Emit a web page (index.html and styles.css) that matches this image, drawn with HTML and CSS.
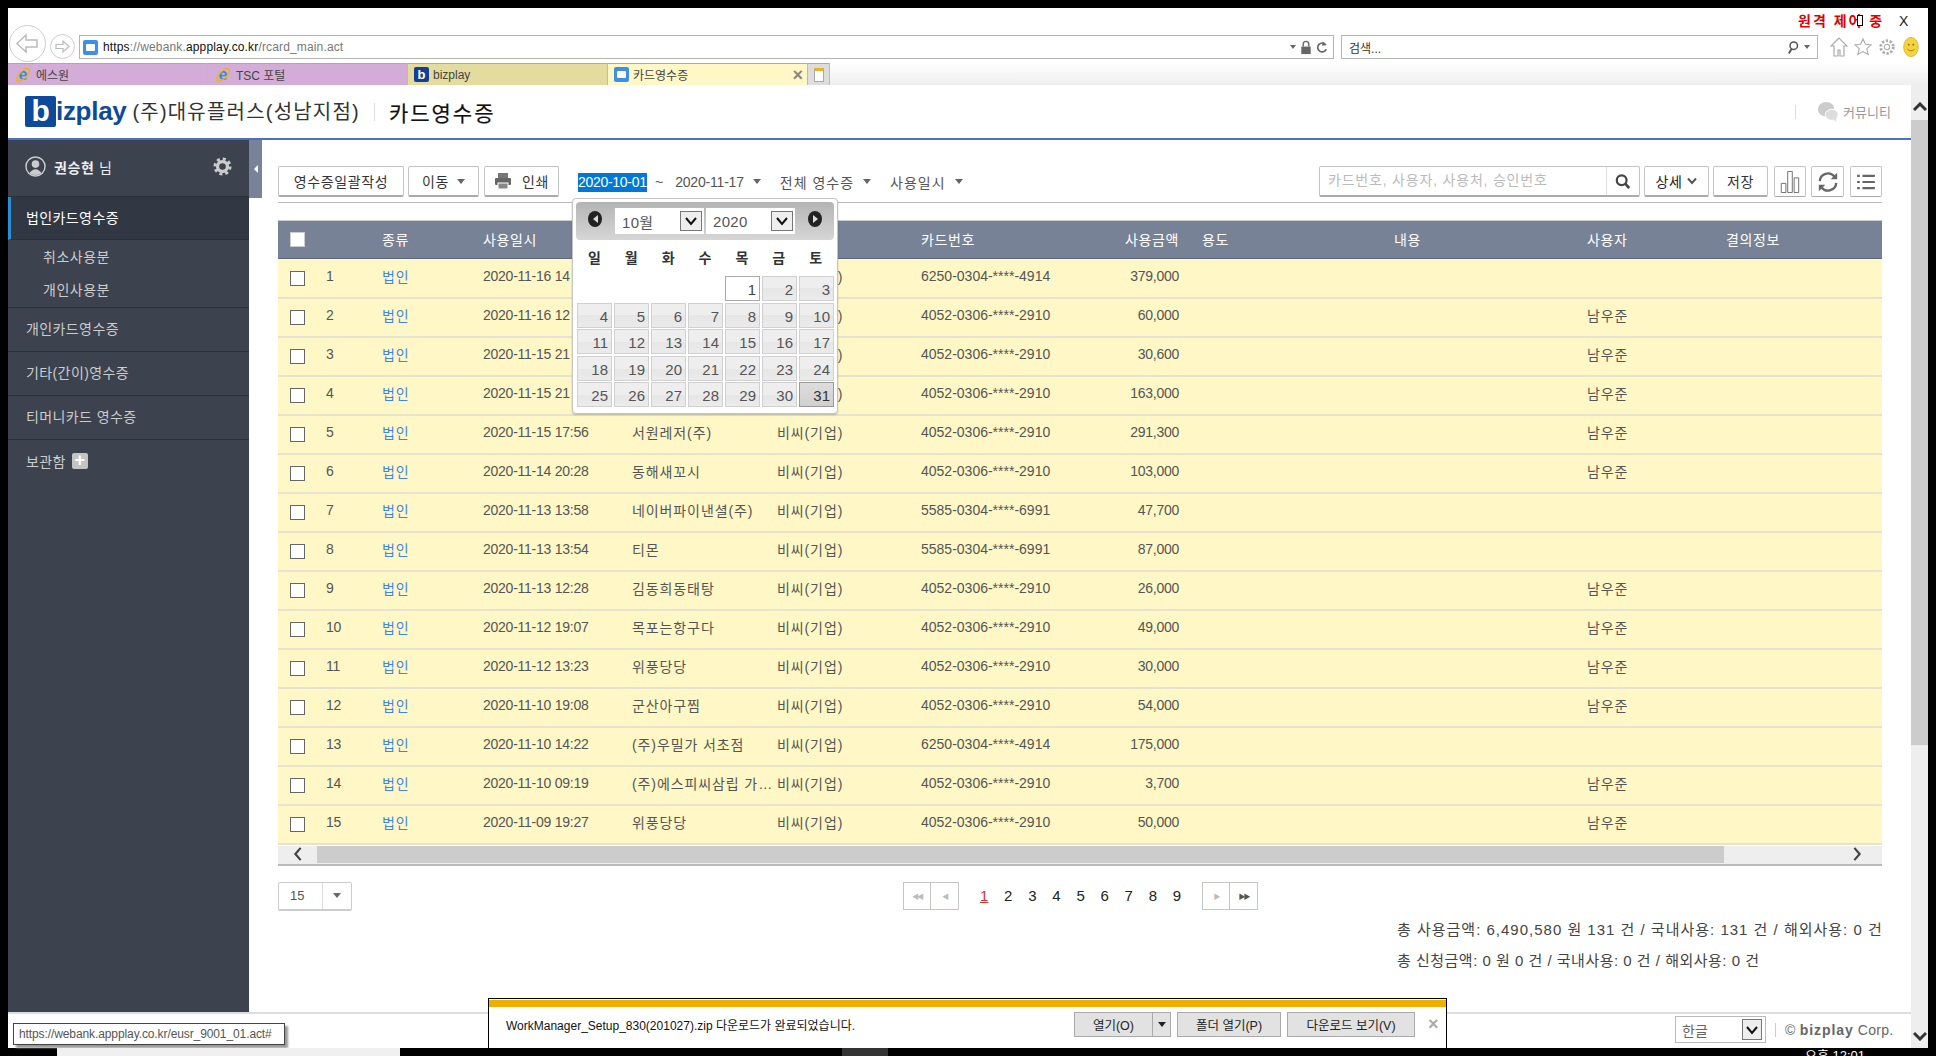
FILE: index.html
```html
<!DOCTYPE html>
<html lang="ko">
<head>
    <meta charset="UTF-8">
    <title>카드영수증</title>
    <link rel="stylesheet" href="styles.css">
</head>
<body>

<div class="screen">
    <div class="remote-label">원격 제어 중</div>
    <div class="remote-cursor"></div>
    <div class="remote-close">X</div>

    <div class="ie-bar">
        <svg class="nav-back" viewBox="0 0 37 37"><circle cx="18.5" cy="18.5" r="18" fill="#fff" stroke="#ccc"/><path d="M8 18.5 17 10v5h11v7H17v5z" fill="#fff" stroke="#bbb" stroke-width="1.5"/></svg>
        <svg class="nav-forward" viewBox="0 0 25 25"><circle cx="12.500" cy="12.500" r="12" fill="#fff" stroke="#ccc"/><path d="M19 12.500 13 7v3.500H6v4h7V18z" fill="#fff" stroke="#bbb" stroke-width="1.200"/></svg>
        <div class="address">
            <span class="favicon"><span class="favicon-dot"></span></span>
            <span class="url"><b>https</b>://webank.<b>appplay.co.kr</b>/rcard_main.act</span>
            <span class="caret small"></span>
            <svg class="addr-icon" viewBox="0 0 12 16"><path d="M3 7V4.500a3 3 0 0 1 6 0V7" fill="none" stroke="#666" stroke-width="1.500"/><rect x="1" y="7" width="10" height="8" fill="#666"/></svg>
            <svg class="addr-icon" viewBox="0 0 14 16"><path d="M11.500 5A5.200 5.200 0 1 0 12 10" fill="none" stroke="#666" stroke-width="2"/><path d="M8 1l4 4-5 1z" fill="#666"/></svg>
        </div>
        <div class="ie-search">
            <span class="ie-search-text">검색...</span>
            <svg class="addr-icon" viewBox="0 0 16 18"><circle cx="9" cy="6.500" r="5" fill="none" stroke="#555" stroke-width="2"/><path d="M6 11l-3.500 6" stroke="#555" stroke-width="2.500"/></svg>
            <span class="caret small"></span>
        </div>
        <div class="ie-tools">
            <svg viewBox="0 0 18 20"><path d="M9 1 1 9h3v10h4v-6h2v6h4V9h3z" fill="none" stroke="#aaa" stroke-width="1.200"/></svg>
            <svg viewBox="0 0 20 20"><path d="M10 1l2.700 6 6.300.6-4.800 4.200 1.500 6.400L10 15l-5.700 3.200 1.500-6.400L1 7.600 7.300 7z" fill="none" stroke="#aaa" stroke-width="1.200"/></svg>
            <svg viewBox="0 0 20 20"><circle cx="10" cy="10" r="3" fill="none" stroke="#aaa" stroke-width="1.200"/><circle cx="10" cy="10" r="7" fill="none" stroke="#aaa" stroke-width="3" stroke-dasharray="2.500 1.900"/></svg>
            <svg viewBox="0 0 20 26"><ellipse cx="10" cy="13" rx="9.500" ry="12.500" fill="#f4d33c" stroke="#d8b020"/><circle cx="7" cy="10" r="1.200" fill="#8a6d10"/><circle cx="13" cy="10" r="1.200" fill="#8a6d10"/><path d="M5.500 16q4.500 4 9 0" fill="none" stroke="#8a6d10"/></svg>
        </div>
    </div>

    <div class="ie-tabs">
        <div class="ie-tab tab-pink">
            <svg class="ie-logo" viewBox="0 0 18 18"><text x="9" y="13.500" text-anchor="middle" class="ie-logo-e">e</text><ellipse cx="9" cy="9" rx="8.500" ry="3.500" fill="none" stroke="#f0b020" stroke-width="1.500" transform="rotate(-45 9 9)"/></svg>
            에스원
        </div>
        <div class="ie-tab tab-pink">
            <svg class="ie-logo" viewBox="0 0 18 18"><text x="9" y="13.500" text-anchor="middle" class="ie-logo-e">e</text><ellipse cx="9" cy="9" rx="8.500" ry="3.500" fill="none" stroke="#f0b020" stroke-width="1.500" transform="rotate(-45 9 9)"/></svg>
            TSC 포털
        </div>
        <div class="ie-tab tab-khaki"><span class="favicon dark">b</span>bizplay</div>
        <div class="ie-tab tab-yellow"><span class="favicon"><span class="favicon-dot"></span></span>카드영수증<span class="tab-close">×</span></div>
        <div class="ie-newtab"><span class="newtab-page"></span></div>
    </div>

    <div class="app-area">
        <div class="app">
            <header class="app-header">
                <div class="logo"><span class="logo-b">b</span>izplay</div>
                <div class="company">(주)대유플러스(성남지점)</div>
                <div class="page-title">카드영수증</div>
                <div class="community">
                    <svg viewBox="0 0 24 24"><ellipse cx="10" cy="9" rx="9" ry="8" fill="#ccc"/><ellipse cx="16" cy="15" rx="7" ry="6" fill="#ddd" stroke="#fff"/><path d="M18 20l3 3v-5z" fill="#ddd"/></svg>
                    커뮤니티
                </div>
            </header>

            <div class="app-body">
                <aside class="sidebar">
                    <div class="user-row">
                        <svg class="user-icon" viewBox="0 0 22 22"><circle cx="11" cy="11" r="10" fill="#3c424e" stroke="#ccc" stroke-width="1.500"/><circle cx="11" cy="8.500" r="4" fill="#ccc"/><path d="M4.500 18q6.500-8 13 0q-6.500 4-13 0z" fill="#ccc"/></svg>
                        <span class="user-name"><b>권승현</b> 님</span>
                        <svg class="gear" viewBox="0 0 20 20"><circle cx="10" cy="10" r="5.200" fill="none" stroke="#ccc" stroke-width="3.400"/><circle cx="10" cy="10" r="8" fill="none" stroke="#ccc" stroke-width="3" stroke-dasharray="3.200 3.080"/></svg>
                    </div>
                    <div class="menu-item active">법인카드영수증</div>
                    <div class="submenu">
                        <div class="submenu-item">취소사용분</div>
                        <div class="submenu-item">개인사용분</div>
                    </div>
                    <div class="menu-item">개인카드영수증</div>
                    <div class="menu-item">기타(간이)영수증</div>
                    <div class="menu-item">티머니카드 영수증</div>
                    <div class="menu-item last">보관함 <span class="plus-box">+</span></div>
                </aside>
                <div class="side-toggle"><span class="toggle-arrow"></span></div>

                <main class="content">
                    <div class="toolbar">
                        <button class="btn btn-batch">영수증일괄작성</button>
                        <button class="btn btn-move">이동<span class="caret"></span></button>
                        <button class="btn btn-print">
                            <svg viewBox="0 0 18 18"><rect x="4" y="1" width="10" height="5" fill="#777"/><rect x="1" y="6" width="16" height="7" rx="1" fill="#666"/><rect x="4" y="11" width="10" height="6" fill="#888" stroke="#fff"/></svg>
                            인쇄
                        </button>
                        <div class="filters">
                            <span class="date-selected">2020-10-01</span>
                            <span class="tilde">~</span>
                            <span class="filter num">2020-11-17<span class="caret"></span></span>
                            <span class="filter">전체 영수증<span class="caret"></span></span>
                            <span class="filter">사용일시<span class="caret"></span></span>
                        </div>
                        <div class="search-box">
                            <span class="search-input">카드번호, 사용자, 사용처, 승인번호</span>
                            <span class="search-btn"><svg viewBox="0 0 18 18"><circle cx="7.500" cy="7.500" r="5.500" fill="none" stroke="#444" stroke-width="2.500"/><path d="M11.500 11.500 16 16.500" stroke="#444" stroke-width="3"/></svg></span>
                        </div>
                        <button class="btn btn-detail"><b>상세</b><svg viewBox="0 0 10 8"><path d="M1 1.500 5 6l4-4.500" fill="none" stroke="#555" stroke-width="2"/></svg></button>
                        <button class="btn btn-save">저장</button>
                        <button class="btn btn-icon btn-chart"><svg viewBox="0 0 24 26"><path d="M2.500 14.500h5v10h-5zM9.500 1.500h5v23h-5zM16.500 8.500h5v16h-5z" fill="none" stroke="#666"/></svg></button>
                        <button class="btn btn-icon btn-refresh"><svg viewBox="0 0 24 24"><path d="M3 11a9 9 0 0 1 16-5M21 13a9 9 0 0 1-16 5" fill="none" stroke="#666" stroke-width="2.500"/><path d="M22 2v7h-7zM2 22v-7h7z" fill="#666"/></svg></button>
                        <button class="btn btn-icon btn-list"><svg viewBox="0 0 20 18"><path d="M0 2h3M6 2h14M0 9h3M6 9h14M0 16h3M6 16h14" stroke="#666" stroke-width="2.500"/></svg></button>
                    </div>

                    <div class="calendar">
                        <div class="cal-head">
                            <span class="cal-nav"><span class="cal-nav-left"></span></span>
                            <div class="cal-select">10월<span class="cal-drop"><svg viewBox="0 0 12 10"><path d="M1 2l5 6 5-6" fill="none" stroke="#111" stroke-width="2"/></svg></span></div>
                            <div class="cal-select">2020<span class="cal-drop"><svg viewBox="0 0 12 10"><path d="M1 2l5 6 5-6" fill="none" stroke="#111" stroke-width="2"/></svg></span></div>
                            <span class="cal-nav"><span class="cal-nav-right"></span></span>
                        </div>
                        <div class="cal-week"><span>일</span><span>월</span><span>화</span><span>수</span><span>목</span><span>금</span><span>토</span></div>
                        <div class="cal-days">
                            <span class="blank"></span><span class="blank"></span><span class="blank"></span><span class="blank"></span>
                            <span class="today">1</span><span>2</span><span>3</span>
                            <span>4</span><span>5</span><span>6</span><span>7</span><span>8</span><span>9</span><span>10</span>
                            <span>11</span><span>12</span><span>13</span><span>14</span><span>15</span><span>16</span><span>17</span>
                            <span>18</span><span>19</span><span>20</span><span>21</span><span>22</span><span>23</span><span>24</span>
                            <span>25</span><span>26</span><span>27</span><span>28</span><span>29</span><span>30</span><span class="selected">31</span>
                        </div>
                    </div>

                    <table class="receipt-table">
                        <colgroup>
                            <col class="c-check"><col class="c-no"><col class="c-type"><col class="c-date"><col class="c-place"><col class="c-card"><col class="c-cardno"><col class="c-amount"><col class="c-use"><col class="c-memo"><col class="c-user"><col class="c-info">
                        </colgroup>
                        <thead>
                            <tr>
                                <th class="check-cell"><span class="check on"></span></th>
                                <th></th><th>종류</th><th>사용일시</th><th></th><th></th><th>카드번호</th><th class="amount">사용금액</th><th>용도</th><th>내용</th><th>사용자</th><th>결의정보</th>
                            </tr>
                        </thead>
                        <tbody>
                            <tr><td class="check-cell"><span class="check"></span></td><td class="num">1</td><td class="kind">법인</td><td class="num">2020-11-16 14</td><td></td><td>비씨(기업)</td><td class="num">6250-0304-****-4914</td><td class="num amount">379,000</td><td></td><td></td><td></td><td></td></tr>
                            <tr><td class="check-cell"><span class="check"></span></td><td class="num">2</td><td class="kind">법인</td><td class="num">2020-11-16 12</td><td></td><td>비씨(기업)</td><td class="num">4052-0306-****-2910</td><td class="num amount">60,000</td><td></td><td></td><td>남우준</td><td></td></tr>
                            <tr><td class="check-cell"><span class="check"></span></td><td class="num">3</td><td class="kind">법인</td><td class="num">2020-11-15 21</td><td></td><td>비씨(기업)</td><td class="num">4052-0306-****-2910</td><td class="num amount">30,600</td><td></td><td></td><td>남우준</td><td></td></tr>
                            <tr><td class="check-cell"><span class="check"></span></td><td class="num">4</td><td class="kind">법인</td><td class="num">2020-11-15 21</td><td></td><td>비씨(기업)</td><td class="num">4052-0306-****-2910</td><td class="num amount">163,000</td><td></td><td></td><td>남우준</td><td></td></tr>
                            <tr><td class="check-cell"><span class="check"></span></td><td class="num">5</td><td class="kind">법인</td><td class="num">2020-11-15 17:56</td><td>서원레저(주)</td><td>비씨(기업)</td><td class="num">4052-0306-****-2910</td><td class="num amount">291,300</td><td></td><td></td><td>남우준</td><td></td></tr>
                            <tr><td class="check-cell"><span class="check"></span></td><td class="num">6</td><td class="kind">법인</td><td class="num">2020-11-14 20:28</td><td>동해새꼬시</td><td>비씨(기업)</td><td class="num">4052-0306-****-2910</td><td class="num amount">103,000</td><td></td><td></td><td>남우준</td><td></td></tr>
                            <tr><td class="check-cell"><span class="check"></span></td><td class="num">7</td><td class="kind">법인</td><td class="num">2020-11-13 13:58</td><td>네이버파이낸셜(주)</td><td>비씨(기업)</td><td class="num">5585-0304-****-6991</td><td class="num amount">47,700</td><td></td><td></td><td></td><td></td></tr>
                            <tr><td class="check-cell"><span class="check"></span></td><td class="num">8</td><td class="kind">법인</td><td class="num">2020-11-13 13:54</td><td>티몬</td><td>비씨(기업)</td><td class="num">5585-0304-****-6991</td><td class="num amount">87,000</td><td></td><td></td><td></td><td></td></tr>
                            <tr><td class="check-cell"><span class="check"></span></td><td class="num">9</td><td class="kind">법인</td><td class="num">2020-11-13 12:28</td><td>김동희동태탕</td><td>비씨(기업)</td><td class="num">4052-0306-****-2910</td><td class="num amount">26,000</td><td></td><td></td><td>남우준</td><td></td></tr>
                            <tr><td class="check-cell"><span class="check"></span></td><td class="num">10</td><td class="kind">법인</td><td class="num">2020-11-12 19:07</td><td>목포는항구다</td><td>비씨(기업)</td><td class="num">4052-0306-****-2910</td><td class="num amount">49,000</td><td></td><td></td><td>남우준</td><td></td></tr>
                            <tr><td class="check-cell"><span class="check"></span></td><td class="num">11</td><td class="kind">법인</td><td class="num">2020-11-12 13:23</td><td>위풍당당</td><td>비씨(기업)</td><td class="num">4052-0306-****-2910</td><td class="num amount">30,000</td><td></td><td></td><td>남우준</td><td></td></tr>
                            <tr><td class="check-cell"><span class="check"></span></td><td class="num">12</td><td class="kind">법인</td><td class="num">2020-11-10 19:08</td><td>군산아구찜</td><td>비씨(기업)</td><td class="num">4052-0306-****-2910</td><td class="num amount">54,000</td><td></td><td></td><td>남우준</td><td></td></tr>
                            <tr><td class="check-cell"><span class="check"></span></td><td class="num">13</td><td class="kind">법인</td><td class="num">2020-11-10 14:22</td><td>(주)우밀가 서초점</td><td>비씨(기업)</td><td class="num">6250-0304-****-4914</td><td class="num amount">175,000</td><td></td><td></td><td></td><td></td></tr>
                            <tr><td class="check-cell"><span class="check"></span></td><td class="num">14</td><td class="kind">법인</td><td class="num">2020-11-10 09:19</td><td>(주)에스피씨삼립 가…</td><td>비씨(기업)</td><td class="num">4052-0306-****-2910</td><td class="num amount">3,700</td><td></td><td></td><td>남우준</td><td></td></tr>
                            <tr><td class="check-cell"><span class="check"></span></td><td class="num">15</td><td class="kind">법인</td><td class="num">2020-11-09 19:27</td><td>위풍당당</td><td>비씨(기업)</td><td class="num">4052-0306-****-2910</td><td class="num amount">50,000</td><td></td><td></td><td>남우준</td><td></td></tr>
                        </tbody>
                    </table>

                    <div class="h-scroll">
                        <span class="h-arrow"><svg viewBox="0 0 10 16"><path d="M8 1 2 8l6 7" fill="none" stroke="#444" stroke-width="2.500"/></svg></span>
                        <span class="h-thumb"></span>
                        <span class="h-arrow right"><svg viewBox="0 0 10 16"><path d="M2 1l6 7-6 7" fill="none" stroke="#444" stroke-width="2.500"/></svg></span>
                    </div>

                    <div class="pager-row">
                        <div class="per-page"><span class="per-page-num">15</span><span class="per-page-drop"><span class="caret"></span></span></div>
                        <div class="pager">
                            <span class="pager-group">
                                <span class="pager-btn off">◀◀</span><span class="pager-btn off">◀</span>
                            </span>
                            <div class="pages">
                                <span class="current">1</span><span>2</span><span>3</span><span>4</span><span>5</span><span>6</span><span>7</span><span>8</span><span>9</span>
                            </div>
                            <span class="pager-group">
                                <span class="pager-btn off">▶</span><span class="pager-btn">▶▶</span>
                            </span>
                        </div>
                    </div>

                    <div class="summary">
                        <div class="summary-row">총 사용금액: 6,490,580 원 131 건 / 국내사용: 131 건 / 해외사용: 0 건</div>
                        <div class="summary-row narrow">총 신청금액: 0 원 0 건 / 국내사용: 0 건 / 해외사용: 0 건</div>
                    </div>
                </main>
            </div>

            <footer class="status-bar">
                <div class="lang-select">한글<span class="cal-drop"><svg viewBox="0 0 12 10"><path d="M1 2l5 6 5-6" fill="none" stroke="#111" stroke-width="2"/></svg></span></div>
                <div class="copyright">© <b>bizplay</b> Corp.</div>
            </footer>
        </div>

        <div class="page-scroll">
            <span class="page-arrow"><svg viewBox="0 0 14 10"><path d="M1 8l6-6 6 6" fill="none" stroke="#333" stroke-width="3"/></svg></span>
            <span class="page-thumb"></span>
            <span class="page-arrow bottom"><svg viewBox="0 0 14 10"><path d="M1 2l6 6 6-6" fill="none" stroke="#333" stroke-width="3"/></svg></span>
        </div>
    </div>

    <div class="url-tip">https://webank.appplay.co.kr/eusr_9001_01.act#</div>

    <div class="download-bar">
        <div class="download-top"></div>
        <div class="download-row">
            <span class="download-text">WorkManager_Setup_830(201027).zip 다운로드가 완료되었습니다.</span>
            <span class="dl-btn dl-open">열기(O)<span class="dl-split"><span class="caret dark"></span></span></span>
            <span class="dl-btn dl-folder">폴더 열기(P)</span>
            <span class="dl-btn dl-view">다운로드 보기(V)</span>
            <span class="dl-close">×</span>
        </div>
    </div>
</div>

<div class="taskbar">
    <span class="task-light"></span>
    <span class="task-dark"></span>
    <span class="task-clock">오후 12:01</span>
</div>

</body>
</html>
```

FILE: styles.css
```css
* {
    box-sizing: border-box;
}

html, body {
    margin: 0;
    height: 1056px;
    overflow: hidden;
}

body {
    background-color: #000;
    font-family: "Liberation Sans", "Noto Sans CJK KR", sans-serif;
    font-size: 14px;
    color: #555;
    padding-top: 8px;
}

button {
    font-family: inherit;
}

.screen {
    position: relative;
    width: 1920px;
    height: 1040px;
    margin-left: 8px;
    background-color: #fff;
    display: flex;
    flex-direction: column;
}

.remote-label {
    position: absolute;
    top: 2px;
    left: 1790px;
    color: #e00000;
    font-size: 14px;
    font-weight: bold;
    letter-spacing: 2px;
}

.remote-cursor {
    position: absolute;
    top: 7px;
    left: 1849px;
    width: 6px;
    height: 11px;
    background-color: #fff;
    border: 1px solid #000;
}

.remote-close {
    position: absolute;
    top: 5px;
    left: 1891px;
    color: #222;
    font-size: 14px;
}

/* browser chrome */
.ie-bar {
    height: 55px;
    display: flex;
    align-items: flex-end;
    padding-bottom: 4px;
    flex-shrink: 0;
}

.nav-back {
    width: 37px;
    height: 37px;
    margin-left: 1px;
    margin-bottom: -3px;
}

.nav-forward {
    width: 25px;
    height: 25px;
    margin-left: 4px;
}

.address {
    width: 1255px;
    height: 24px;
    margin-left: 4px;
    border: 1px solid #b4b4b4;
    display: flex;
    align-items: center;
    padding: 0 5px 0 3px;
    gap: 4px;
}

.favicon {
    width: 15px;
    height: 15px;
    background-color: #3f8ee8;
    border-radius: 2px;
    display: inline-flex;
    align-items: center;
    justify-content: center;
    flex-shrink: 0;
}

.favicon.dark {
    background-color: #123f8f;
    color: #fff;
    font-weight: bold;
    font-size: 13px;
}

.favicon-dot {
    width: 9px;
    height: 7px;
    background-color: #fff;
    border-radius: 1px;
}

.url {
    flex: 1;
    margin-left: 1px;
    color: #777;
    font-size: 12px;
    letter-spacing: 0.15px;
}

.url b {
    font-weight: normal;
    color: #111;
}

.addr-icon {
    width: 12px;
    height: 15px;
}

.ie-search {
    width: 477px;
    height: 24px;
    margin-left: 7px;
    border: 1px solid #b4b4b4;
    display: flex;
    align-items: center;
    padding: 0 7px;
    gap: 5px;
}

.ie-search-text {
    flex: 1;
    color: #333;
    font-size: 12px;
}

.ie-tools {
    display: flex;
    align-items: center;
    gap: 6px;
    margin-left: 12px;
    height: 24px;
}

.ie-tools svg {
    width: 18px;
    height: 20px;
}

.ie-tabs {
    height: 22px;
    display: flex;
    flex-shrink: 0;
    background: linear-gradient(#fff, #eee);
}

.ie-tab {
    width: 200px;
    display: flex;
    align-items: center;
    gap: 4px;
    padding-left: 6px;
    font-size: 12px;
    color: #444;
    border-top: 1px solid #aaa;
    border-right: 1px solid #bbb;
}

.tab-pink {
    background-color: #d3add8;
}

.tab-khaki {
    background-color: #e3dc9e;
}

.tab-yellow {
    background-color: #fff7c6;
}

.tab-close {
    margin-left: auto;
    margin-right: 4px;
    color: #888;
    font-size: 18px;
    font-weight: bold;
    line-height: 1;
}

.ie-logo {
    width: 18px;
    height: 18px;
}

.ie-logo-e {
    font-family: "Liberation Sans", sans-serif;
    font-size: 16px;
    font-weight: bold;
    fill: #2a8fd8;
}

.ie-newtab {
    width: 22px;
    background-color: #ddd;
    border-top: 1px solid #aaa;
    border-right: 1px solid #bbb;
    display: flex;
    align-items: center;
    justify-content: center;
}

.newtab-page {
    width: 10px;
    height: 14px;
    background-color: #fff;
    border: 1px solid #aaa;
    border-top: 3px solid #f0b020;
}

/* app */
.app-area {
    flex: 1;
    display: flex;
    min-height: 0;
}

.app {
    width: 1903px;
    display: flex;
    flex-direction: column;
}

.app-header {
    height: 55px;
    flex-shrink: 0;
    border-bottom: 2px solid #4a72c4;
    display: flex;
    align-items: center;
    padding-left: 17px;
}

.logo {
    color: #0d4a9c;
    font-size: 26px;
    font-weight: bold;
    letter-spacing: -0.3px;
    display: flex;
    align-items: center;
}

.logo-b {
    width: 31px;
    height: 31px;
    background-color: #0d4a9c;
    color: #fff;
    border-radius: 2px;
    font-size: 30px;
    line-height: 29px;
    text-align: center;
}

.company {
    margin-left: 6px;
    font-size: 20px;
    color: #333;
    letter-spacing: 1.2px;
    padding-right: 14px;
    border-right: 1px solid #ddd;
    line-height: 18px;
}

.page-title {
    margin-left: 14px;
    font-size: 21px;
    color: #111;
    letter-spacing: 2px;
    -webkit-text-stroke: 0.2px #111;
}

.community {
    margin-left: auto;
    width: 108px;
    margin-right: 8px;
    padding-left: 21px;
    display: flex;
    align-items: center;
    gap: 4px;
    font-size: 13px;
    color: #999;
    border-left: 1px solid #ddd;
    height: 14px;
}

.community svg {
    width: 22px;
    height: 22px;
}

.app-body {
    flex: 1;
    position: relative;
    display: flex;
    min-height: 0;
}

.sidebar {
    width: 241px;
    background-color: #3c424e;
    flex-shrink: 0;
    color: #ccc;
}

.user-row {
    height: 57px;
    display: flex;
    align-items: center;
    padding: 0 17px 3px 17px;
    gap: 8px;
    border-bottom: 1px solid #2c303a;
}

.user-icon {
    width: 21px;
    height: 21px;
}

.user-name {
    color: #eee;
    font-size: 14px;
    flex: 1;
    letter-spacing: 0.6px;
}

.gear {
    width: 19px;
    height: 19px;
}

.menu-item {
    height: 44px;
    display: flex;
    align-items: center;
    padding-left: 18px;
    padding-bottom: 3px;
    border-bottom: 1px solid #2c303a;
    font-size: 14px;
    letter-spacing: 0.4px;
}

.menu-item.active {
    height: 43px;
    background-color: #323744;
    border-left: 3px solid #2a8fd8;
    padding-left: 15px;
    color: #fff;
}

.menu-item.last {
    border-bottom: none;
    gap: 6px;
}

.plus-box {
    width: 16px;
    height: 16px;
    background-color: #c4c4c4;
    border-radius: 2px;
    color: #fff;
    font-weight: bold;
    font-size: 18px;
    line-height: 15px;
    text-align: center;
}

.submenu {
    height: 68px;
    padding: 0 0 0 35px;
    border-bottom: 1px solid #2c303a;
    font-size: 14px;
    letter-spacing: 0.5px;
}

.submenu-item {
    height: 33px;
    display: flex;
    align-items: center;
    padding-bottom: 2px;
}

.side-toggle {
    width: 13px;
    height: 58px;
    background-color: #78839a;
    flex-shrink: 0;
    display: flex;
    align-items: center;
    justify-content: center;
}

.toggle-arrow {
    width: 0;
    height: 0;
    border-top: 4px solid transparent;
    border-bottom: 4px solid transparent;
    border-right: 4px solid #fff;
}

.content {
    position: relative;
    width: 1604px;
    margin-left: 16px;
    padding-top: 26px;
}

.toolbar {
    height: 37px;
    display: flex;
    align-items: flex-start;
    border-bottom: 1px solid #bbb;
    margin-bottom: 17px;
}

.btn {
    height: 31px;
    background-color: #fff;
    border: 1px solid #c4c4c4;
    border-bottom: 2px solid #aaa;
    border-radius: 2px;
    color: #333;
    font-size: 14px;
    letter-spacing: 0.6px;
    display: flex;
    align-items: center;
    justify-content: center;
    padding: 0;
}

.btn-batch {
    width: 126px;
}

.btn-move {
    width: 71px;
    margin-left: 4px;
    gap: 8px;
}

.btn-print {
    width: 75px;
    margin-left: 5px;
    gap: 10px;
}

.btn-print svg {
    width: 18px;
    height: 18px;
}

.filters {
    width: 741px;
    height: 31px;
    margin-left: 19px;
    display: flex;
    align-items: center;
    font-size: 14px;
    color: #555;
}

.date-selected {
    width: 69px;
    height: 19px;
    background-color: #0078d7;
    color: #fff;
    font-size: 14px;
    letter-spacing: -0.3px;
    line-height: 19px;
    white-space: nowrap;
    margin-top: 2px;
}

.tilde {
    margin: 0 12px 0 8px;
}

.filter {
    display: flex;
    align-items: center;
    gap: 9px;
    margin-right: 19px;
    letter-spacing: 1px;
}

.filter.num {
    letter-spacing: -0.2px;
}

.caret {
    width: 0;
    height: 0;
    border-left: 4px solid transparent;
    border-right: 4px solid transparent;
    border-top: 5px solid #666;
    display: inline-block;
}

.caret.small {
    border-left-width: 3px;
    border-right-width: 3px;
    border-top-width: 4px;
}

.caret.dark {
    border-top-color: #222;
}

.search-box {
    width: 321px;
    height: 31px;
    display: flex;
    background-color: #fff;
    border: 1px solid #c4c4c4;
    border-bottom: 2px solid #aaa;
    border-radius: 2px;
}

.search-input {
    flex: 1;
    padding-left: 8px;
    line-height: 27px;
    font-size: 14px;
    color: #bbb;
    letter-spacing: 0.8px;
    white-space: nowrap;
    border-right: 1px solid #ddd;
}

.search-btn {
    width: 32px;
    display: flex;
    align-items: center;
    justify-content: center;
}

.search-btn svg {
    width: 16px;
    height: 17px;
}

.btn-detail {
    width: 65px;
    margin-left: 4px;
    gap: 5px;
}

.btn-detail b {
    font-weight: normal;
    color: #222;
}

.btn-detail svg {
    width: 10px;
    height: 8px;
}

.btn-save {
    width: 55px;
    margin-left: 4px;
}

.btn-icon {
    border-bottom-width: 1px;
}

.btn-chart {
    width: 32px;
    margin-left: 6px;
}

.btn-chart svg {
    width: 22px;
    height: 24px;
}

.btn-refresh {
    width: 33px;
    margin-left: 5px;
}

.btn-refresh svg {
    width: 22px;
    height: 22px;
}

.btn-list {
    width: 32px;
    margin-left: 6px;
}

.btn-list svg {
    width: 18px;
    height: 16px;
}

/* date picker */
.calendar {
    position: absolute;
    left: 294px;
    top: 58px;
    width: 266px;
    height: 216px;
    z-index: 5;
    background-color: #fff;
    border: 1px solid #c4c4c4;
    border-radius: 4px;
    box-shadow: 0 1px 2px rgba(0, 0, 0, 0.2);
    padding: 3px;
}

.cal-head {
    height: 38px;
    border-radius: 4px;
    background: linear-gradient(#b4b4b4, #d6d6d6);
    display: flex;
    align-items: center;
    justify-content: center;
    gap: 2px;
}

.cal-select {
    width: 89px;
    height: 26px;
    background-color: #fff;
    color: #555;
    font-size: 15px;
    letter-spacing: 0.3px;
    display: flex;
    align-items: center;
    justify-content: space-between;
    padding: 0 2px 0 7px;
}

.cal-drop {
    width: 22px;
    height: 20px;
    background-color: #eee;
    border: 1px solid #777;
    display: inline-flex;
    align-items: center;
    justify-content: center;
}

.cal-drop svg {
    width: 12px;
    height: 10px;
}

.cal-nav {
    width: 14px;
    height: 16px;
    border-radius: 50%;
    background-color: #222;
    margin: 0 11px 4px;
    display: flex;
    align-items: center;
    justify-content: center;
    flex-shrink: 0;
}

.cal-nav-left {
    width: 0;
    height: 0;
    border-top: 4px solid transparent;
    border-bottom: 4px solid transparent;
    border-right: 5px solid #ddd;
}

.cal-nav-right {
    width: 0;
    height: 0;
    border-top: 4px solid transparent;
    border-bottom: 4px solid transparent;
    border-left: 5px solid #ddd;
}

.cal-week {
    display: grid;
    grid-template-columns: repeat(7, 1fr);
    height: 36px;
    padding-bottom: 2px;
    align-items: center;
    text-align: center;
    font-size: 14px;
    font-weight: bold;
    color: #333;
}

.cal-days {
    display: grid;
    grid-template-columns: repeat(7, 35px);
    grid-auto-rows: 25px;
    gap: 1.5px 2px;
    padding-left: 1px;
}

.cal-days span {
    border: 1px solid #d0d0d0;
    background: linear-gradient(#eee, #eee 50%, #e6e6e6 50%, #ebebeb);
    color: #555;
    font-size: 15px;
    line-height: 25px;
    text-align: right;
    padding-right: 3px;
}

.cal-days .blank {
    border: none;
    background: none;
}

.cal-days .today {
    background: #fff;
    border: 1px solid #aaa;
    color: #444;
}

.cal-days .selected {
    background: linear-gradient(#ddd, #d0d0d0);
    border: 1px solid #999;
    color: #333;
}

/* table */
.receipt-table {
    width: 1604px;
    table-layout: fixed;
    border-collapse: collapse;
}

.c-check { width: 48px; }
.c-no { width: 56px; }
.c-type { width: 101px; }
.c-date { width: 149px; }
.c-place { width: 145px; }
.c-card { width: 144px; }
.c-cardno { width: 179px; }
.c-amount { width: 102px; }
.c-use { width: 192px; }
.c-memo { width: 193px; }
.c-user { width: 139px; }
.c-info { width: 156px; }

.receipt-table th {
    height: 38px;
    background-color: #778296;
    border-top: 1px solid #ccc;
    border-bottom: 1px solid #5e6878;
    color: #fff;
    font-weight: normal;
    font-size: 14px;
    letter-spacing: 0.6px;
    text-align: left;
    padding: 0 0 2px 0;
}

.receipt-table td {
    height: 39px;
    background-color: #fff7c6;
    border-bottom: 2px solid #e6e3d0;
    padding: 0 0 4px 0;
    color: #555;
    font-size: 14px;
    letter-spacing: 0.9px;
    white-space: nowrap;
    overflow: hidden;
}

.receipt-table td.num {
    letter-spacing: -0.25px;
}

.receipt-table td:nth-child(7) {
    letter-spacing: 0;
}

.receipt-table td.kind {
    color: #3b86e8;
}

.receipt-table .amount {
    text-align: right;
    padding-right: 23px;
}

.check-cell {
    padding-left: 12px !important;
}

.check {
    display: block;
    width: 15px;
    height: 15px;
    margin-top: 5px;
    background-color: #fff;
    border: 1px solid #666;
}

.check.on {
    margin-top: 2px;
    border-color: #ccc;
}

.h-scroll {
    height: 18px;
    margin-top: 1px;
    background-color: #eee;
    display: flex;
    align-items: center;
    border-bottom: 1px solid #eee;
}

.h-arrow {
    width: 39px;
    height: 17px;
    display: flex;
    align-items: center;
    justify-content: center;
    flex-shrink: 0;
}

.h-arrow.right {
    margin-left: auto;
    width: 158px;
    padding-left: 108px;
}

.h-arrow svg {
    width: 10px;
    height: 14px;
}

.h-thumb {
    width: 1407px;
    height: 17px;
    background-color: #ccc;
}

.pager-row {
    border-top: 2px solid #bbb;
    padding-top: 16px;
    display: flex;
    align-items: flex-start;
    height: 48px;
}

.per-page {
    width: 74px;
    height: 29px;
    border: 1px solid #ccc;
    border-bottom: 2px solid #ccc;
    border-radius: 2px;
    display: flex;
    font-size: 13px;
}

.per-page-num {
    width: 44px;
    padding-left: 11px;
    line-height: 26px;
    border-right: 1px solid #ddd;
}

.per-page-drop {
    flex: 1;
    display: flex;
    align-items: center;
    justify-content: center;
}

.pager {
    display: flex;
    margin-left: 551px;
    align-items: center;
    height: 28px;
}

.pager-group {
    display: flex;
    height: 28px;
    border: 1px solid #c4c4c4;
}

.pager-btn {
    width: 27px;
    display: flex;
    align-items: center;
    justify-content: center;
    font-size: 7px;
    letter-spacing: -2px;
    color: #555;
    border-right: 1px solid #c4c4c4;
}

.pager-btn:last-child {
    border-right: none;
}

.pager-btn.off {
    color: #bbb;
}

.pages {
    width: 243px;
    display: flex;
    padding-left: 21px;
    color: #222;
    font-size: 15px;
}

.pages span {
    width: 24.100px;
    text-align: left;
}

.pages .current {
    color: #e03030;
    text-decoration: underline;
}

.summary {
    margin-top: 8px;
    padding-left: 1119px;
    font-size: 15px;
    letter-spacing: 1px;
    color: #444;
    white-space: nowrap;
}

.summary-row {
    height: 31px;
    line-height: 20px;
}

.summary-row.narrow {
    letter-spacing: 0.5px;
}

.status-bar {
    height: 36px;
    flex-shrink: 0;
    border-top: 2px solid #ddd;
    background-color: #fff;
    display: flex;
    align-items: center;
    justify-content: flex-end;
    padding: 0 25px 3px 0;
}

.lang-select {
    width: 91px;
    height: 27px;
    border: 1px solid #bbb;
    display: flex;
    align-items: center;
    justify-content: space-between;
    padding: 0 3px 0 6px;
    color: #666;
    font-size: 14px;
}

.lang-select .cal-drop {
    height: 21px;
    width: 20px;
}

.copyright {
    margin-left: 9px;
    padding-left: 9px;
    border-left: 1px solid #ccc;
    font-size: 14px;
    color: #666;
    letter-spacing: 0.3px;
    line-height: 14px;
    width: 111px;
    white-space: nowrap;
}

.copyright b {
    letter-spacing: 0.9px;
}

.page-scroll {
    width: 17px;
    background-color: #eee;
    display: flex;
    flex-direction: column;
}

.page-arrow {
    height: 35px;
    flex-shrink: 0;
    display: flex;
    align-items: center;
    justify-content: center;
    padding-top: 8px;
}

.page-arrow svg {
    display: block;
    flex: none;
    width: 14px;
    height: 10px;
}

.page-arrow.bottom {
    margin-top: auto;
    padding-top: 10px;
}

.page-thumb {
    height: 625px;
    flex-shrink: 0;
    background-color: #ccc;
}

/* things lying over the page */
.url-tip {
    position: absolute;
    left: 5px;
    top: 1015px;
    width: 272px;
    height: 22px;
    background-color: #fff;
    border: 1px solid #444;
    box-shadow: 3px 3px 2px #999;
    padding-left: 5px;
    font-size: 12px;
    line-height: 20px;
    color: #555;
    white-space: nowrap;
    letter-spacing: -0.1px;
}

.download-bar {
    position: absolute;
    left: 480px;
    top: 990px;
    width: 959px;
    height: 50px;
    background-color: #fff;
    border: 1px solid #000;
    border-bottom: none;
}

.download-top {
    height: 7px;
    margin-top: 1px;
    background-color: #f0ae00;
}

.download-row {
    height: 41px;
    display: flex;
    align-items: center;
    padding-left: 17px;
    padding-bottom: 7px;
    font-size: 12px;
    color: #111;
}

.download-text {
    width: 568px;
    white-space: nowrap;
}

.dl-btn {
    height: 25px;
    background-color: #e2e2e2;
    border: 1px solid #aaa;
    color: #222;
    font-size: 12.500px;
    display: flex;
    align-items: center;
    justify-content: center;
}

.dl-open {
    width: 97px;
    justify-content: flex-end;
}

.dl-split {
    width: 18px;
    height: 23px;
    margin-left: 18px;
    border-left: 1px solid #aaa;
    display: flex;
    align-items: center;
    justify-content: center;
}

.dl-folder {
    width: 104px;
    margin-left: 6px;
}

.dl-view {
    width: 128px;
    margin-left: 6px;
}

.dl-close {
    margin-left: 13px;
    color: #aaa;
    font-size: 18px;
    font-weight: bold;
}

.taskbar {
    height: 8px;
    position: relative;
    overflow: hidden;
}

.task-light {
    position: absolute;
    left: 57px;
    top: 0;
    width: 343px;
    height: 8px;
    background-color: #f0f0f0;
}

.task-dark {
    position: absolute;
    left: 842px;
    top: 0;
    width: 46px;
    height: 8px;
    background-color: #333;
}

.task-clock {
    position: absolute;
    left: 1805px;
    top: 0;
    color: #fff;
    font-size: 13px;
    line-height: 16px;
}
```
